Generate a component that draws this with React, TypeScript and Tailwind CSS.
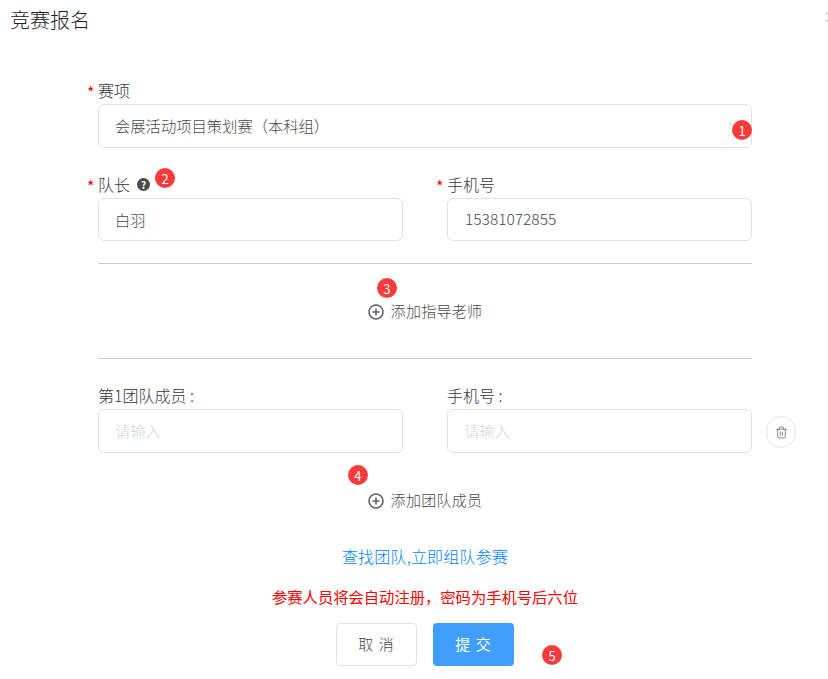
import React from "react";
import { Trash2 } from "lucide-react";

const font = "font-['Noto_Sans_CJK_SC','Noto_Sans',sans-serif]";

function Badge({ n, className }: { n: number; className: string }) {
  return (
    <span className={`absolute z-10 flex h-5 w-5 items-center justify-center rounded-full bg-[#fb3a3a] text-[13px] font-normal leading-none text-white ${className}`}>
      {n}
    </span>
  );
}

function Label({ text, required, children }: { text: string; required?: boolean; children?: React.ReactNode }) {
  return (
    <div className="relative flex h-[26px] items-center pb-[3px] text-[16px] leading-[22px] text-[#33363b]">
      {required && <span className="absolute left-[-11px] top-[3px] text-[16px] font-normal text-[#ff0000]">*</span>}
      <span>{text}</span>
      {children}
    </div>
  );
}

function Field({ value, placeholder, className = "" }: { value?: string; placeholder?: string; className?: string }) {
  return (
    <div className={`flex h-[44px] items-center rounded-[6px] border border-[#dfe0e8] bg-white px-4 pb-[1px] text-[15.3px] ${value ? "text-[#45484d]" : "text-[#d3d5db]"} ${className}`}>
      {value || placeholder}
    </div>
  );
}

function PlusIcon() {
  return (
    <svg width="16" height="16" viewBox="0 0 16 16" fill="none" stroke="#5f6368" strokeWidth="1.6">
      <circle cx="8" cy="8" r="7" />
      <path d="M8 4.5v7M4.5 8h7" />
    </svg>
  );
}

function AddRow({ text, className, children }: { text: string; className: string; children: React.ReactNode }) {
  return (
    <div className={`relative flex h-[22px] items-center justify-center gap-[7px] text-[15px] tracking-[0.3px] text-[#45484d] ${className}`}>
      <PlusIcon />
      <span className="relative top-[-1px]">{text}</span>
      {children}
    </div>
  );
}

export default function App() {
  return (
    <div className={`relative h-[679px] w-[828px] overflow-hidden bg-white font-light ${font}`}>
      <header className="flex h-[40px] items-center pl-[10px] text-[20px] text-[#1f2023]">竞赛报名</header>
      <svg className="absolute left-[825px] top-[11px]" width="10" height="12" viewBox="0 0 10 12" fill="none" stroke="#a8a8a8" strokeWidth="1">
        <path d="M1 1l8 10M9 1L1 11" />
      </svg>

      <main className="ml-[98px] flex w-[654px] flex-col pt-[38px]">
        <Label text="赛项" required />
        <div className="relative">
          <Field value="会展活动项目策划赛（本科组）" />
          <svg className="absolute left-[630px] top-[17px]" width="14" height="8" viewBox="0 0 14 8" fill="none" stroke="#c0c4cc" strokeWidth="1">
            <path d="M1 1l6 6 6-6" />
          </svg>
          <Badge n={1} className="left-[634px] top-[16px]" />
        </div>

        <div className="mt-[24px] grid grid-cols-2 gap-x-[44px]">
          <div>
            <Label text="队长" required>
              <span className="ml-[7px] mt-[2px] flex h-[13px] w-[13px] items-center justify-center rounded-full bg-[#4a4a4a] text-[10px] font-bold leading-none text-white">?</span>
              <Badge n={2} className="left-[57px] top-[-4px]" />
            </Label>
            <Field value="白羽" className="!h-[43px]" />
          </div>
          <div>
            <Label text="手机号" required />
            <Field value="15381072855" className="!h-[43px] !pl-[17px] !text-[15.5px]" />
          </div>
        </div>

        <div className="mt-[22px] border-t border-[#c8c9cc]" />
        <AddRow text="添加指导老师" className="mt-[37px]">
          <Badge n={3} className="left-[279px] top-[-23px]" />
        </AddRow>
        <div className="mt-[35px] border-t border-[#c8c9cc]" />

        <div className="mt-[24px] flex gap-x-[44px]">
          <div className="w-[305px] shrink-0">
            <Label text="第1团队成员 :" />
            <Field placeholder="请输入" />
          </div>
          <div className="w-[305px] shrink-0">
            <Label text="手机号 :" />
            <Field placeholder="请输入" />
          </div>
          <button className="ml-[-30px] mt-[33px] flex h-[32px] w-[30px] shrink-0 items-center justify-center rounded-full border border-[#e0e1e8] bg-white">
            <Trash2 size={13} strokeWidth={1.4} color="#606266" />
          </button>
        </div>

        <AddRow text="添加团队成员" className="mt-[37px]">
          <Badge n={4} className="left-[250px] top-[-25px]" />
        </AddRow>

        <div className="mt-[33px] text-center text-[16px] leading-[22px] tracking-[0.2px] text-[#007fff]">查找团队,立即组队参赛</div>
        <div className="mt-[18px] text-center text-[15.3px] font-normal leading-[22px] text-[#ff0000]">参赛人员将会自动注册，密码为手机号后六位</div>

        <div className="relative mt-[16px] flex justify-center gap-[16px]">
          <button className="h-[43px] w-[81px] rounded-[4px] border border-[#dfe0e8] bg-white text-[15px] tracking-[1px] text-[#45484d]">取 消</button>
          <button className="h-[43px] w-[81px] rounded-[4px] bg-[#409eff] text-[15px] font-normal tracking-[1px] text-white">提 交</button>
          <Badge n={5} className="left-[444px] top-[22px]" />
        </div>
      </main>
    </div>
  );
}
